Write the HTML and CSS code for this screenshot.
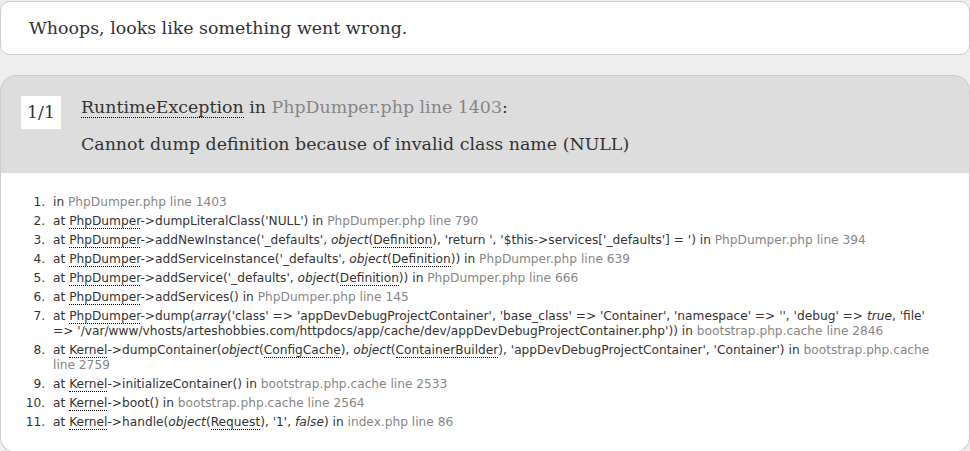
FILE: index.html
```html
<!DOCTYPE html>
<html lang="en">
<head>
<meta charset="utf-8">
<title>Whoops, looks like something went wrong.</title>
<link rel="stylesheet" href="styles.css">
</head>
<body>
<div class="page">
  <h1 class="header">Whoops, looks like something went wrong.</h1>
  <div class="exception">
    <div class="counter">1/1</div>
    <div class="exception-text">
      <h2 class="title"><abbr title="Symfony\Component\DependencyInjection\Exception\RuntimeException">RuntimeException</abbr> in <a class="file">PhpDumper.php line 1403</a>:</h2>
      <h2 class="message">Cannot dump definition because of invalid class name (NULL)</h2>
    </div>
  </div>
  <div class="block">
    <ol class="traces">
      <li>in <a class="file">PhpDumper.php line 1403</a></li>
      <li>at <abbr title="PhpDumper">PhpDumper</abbr>-&gt;dumpLiteralClass('NULL') in <a class="file">PhpDumper.php line 790</a></li>
      <li>at <abbr title="PhpDumper">PhpDumper</abbr>-&gt;addNewInstance('_defaults', <em>object</em>(<abbr title="Definition">Definition</abbr>), 'return ', '$this-&gt;services['_defaults'] = ') in <a class="file">PhpDumper.php line 394</a></li>
      <li>at <abbr title="PhpDumper">PhpDumper</abbr>-&gt;addServiceInstance('_defaults', <em>object</em>(<abbr title="Definition">Definition</abbr>)) in <a class="file">PhpDumper.php line 639</a></li>
      <li>at <abbr title="PhpDumper">PhpDumper</abbr>-&gt;addService('_defaults', <em>object</em>(<abbr title="Definition">Definition</abbr>)) in <a class="file">PhpDumper.php line 666</a></li>
      <li>at <abbr title="PhpDumper">PhpDumper</abbr>-&gt;addServices() in <a class="file">PhpDumper.php line 145</a></li>
      <li>at <abbr title="PhpDumper">PhpDumper</abbr>-&gt;dump(<em>array</em>('class' =&gt; 'appDevDebugProjectContainer', 'base_class' =&gt; 'Container', 'namespace' =&gt; '', 'debug' =&gt; <em>true</em>, 'file' =&gt; '/var/www/vhosts/arteshobbies.com/httpdocs/app/cache/dev/appDevDebugProjectContainer.php')) in <a class="file">bootstrap.php.cache line 2846</a></li>
      <li>at <abbr title="Kernel">Kernel</abbr>-&gt;dumpContainer(<em>object</em>(<abbr title="ConfigCache">ConfigCache</abbr>), <em>object</em>(<abbr title="ContainerBuilder">ContainerBuilder</abbr>), 'appDevDebugProjectContainer', 'Container') in <a class="file">bootstrap.php.cache line 2759</a></li>
      <li>at <abbr title="Kernel">Kernel</abbr>-&gt;initializeContainer() in <a class="file">bootstrap.php.cache line 2533</a></li>
      <li>at <abbr title="Kernel">Kernel</abbr>-&gt;boot() in <a class="file">bootstrap.php.cache line 2564</a></li>
      <li>at <abbr title="Kernel">Kernel</abbr>-&gt;handle(<em>object</em>(<abbr title="Request">Request</abbr>), '1', <em>false</em>) in <a class="file">index.php line 86</a></li>
    </ol>
  </div>
</div>
</body>
</html>
```

FILE: styles.css
```css
* {
  box-sizing: border-box;
}

html, body {
  margin: 0;
  padding: 0;
  background: #eeeeee;
}

body {
  padding-top: 1px;
  font: 12px "DejaVu Sans", Verdana, sans-serif;
  color: #333333;
}

.page {
  width: 970px;
}

abbr {
  text-decoration: none;
  border-bottom: 1px dotted #000000;
  cursor: help;
}

.file {
  color: #868686;
  text-decoration: none;
}

em {
  font-style: italic;
}

.header {
  margin: 0 0 20px 0;
  padding: 15px 28px;
  background: #ffffff;
  border: 1px solid #cccccc;
  border-radius: 10px;
  font-family: "DejaVu Serif", Georgia, serif;
  font-weight: normal;
  font-size: 17.4px;
  line-height: 22px;
  color: #313131;
}

.exception {
  display: grid;
  grid-template-columns: 60px 1fr;
  align-items: start;
  padding: 20px 20px 17px 20px;
  background: #dddddd;
  color: #333333;
  border: 1px solid #cccccc;
  border-bottom: none;
  border-radius: 16px 16px 0 0;
}

.counter {
  justify-self: start;
  background: #ffffff;
  padding: 6px;
  font-family: "DejaVu Serif", Georgia, serif;
  font-size: 17.4px;
  line-height: 21px;
  color: #333333;
}

.exception-text {
  min-width: 0;
}

.title,
.message {
  margin: 0;
  font-family: "DejaVu Serif", Georgia, serif;
  font-weight: normal;
  font-size: 17.4px;
  line-height: 23px;
  color: #333333;
}

.title {
  margin-bottom: 14px;
}

.block {
  padding: 10px 28px;
  background: #ffffff;
  border: 1px solid #cccccc;
  border-top: none;
  border-radius: 0 0 16px 16px;
}

.traces {
  margin: 0;
  padding: 10px 0;
}

.traces li {
  margin-left: 20px;
  padding: 2px 4px;
  font-size: 12.2px;
  line-height: 15px;
  list-style-type: decimal;
}
```
